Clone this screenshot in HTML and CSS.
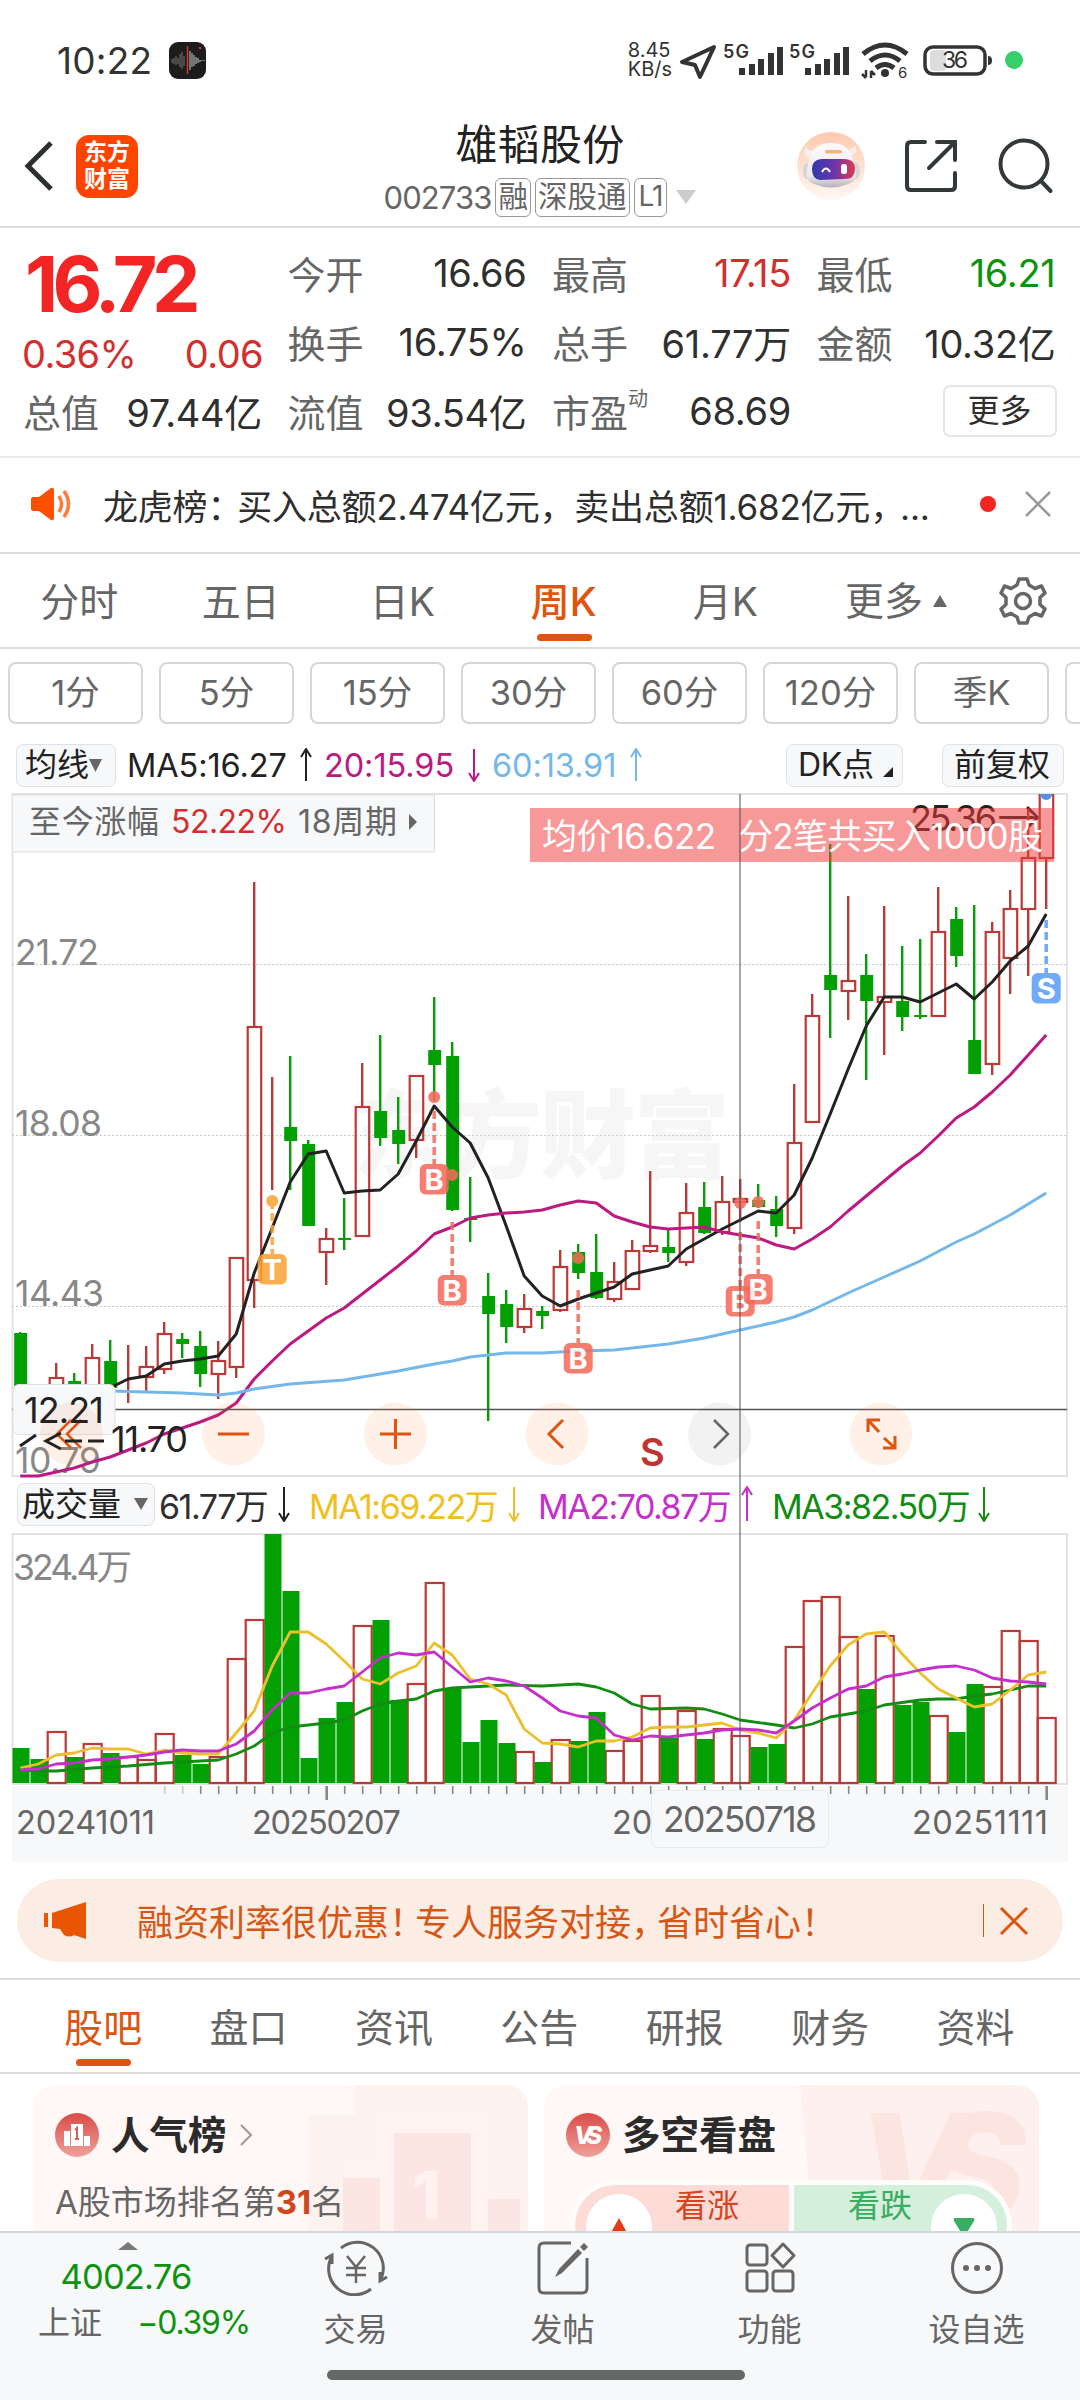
FILE: index.html
```html
<!DOCTYPE html>
<html lang="zh-CN">
<head>
    <meta charset="UTF-8">
    <meta name="viewport" content="width=device-width, initial-scale=1.0">
    <title>雄韬股份 002733</title>
    <link rel="stylesheet" href="styles.css">
</head>
<body>

<div class="page">
    <!-- Phone status bar -->
    <div class="status">
        <span class="time">10:22</span>
        <svg class="rec" width="37" height="37" viewBox="0 0 37 37">
            <rect width="37" height="37" rx="9" fill="#1c1c1c"/>
            <path d="M3 17v4M5 16v6M7 14v9M9 16v6M11 12v13M13 10v17M15 14v10" stroke="#777" stroke-width="1"/>
            <path d="M21 9v19M23 11v14M25 13v11M27 15v7M29 16v5M31 18v2M33 18v1M35 18v1" stroke="#ccc" stroke-width="1"/>
            <path d="M18.500 4v28" stroke="#d4372c" stroke-width="1.500"/>
            <circle cx="31" cy="6" r="1.300" fill="#d4372c"/>
        </svg>
        <span class="speed">8.45<br>KB/s</span>
        <svg class="sysicons" width="350" height="44" viewBox="676 38 350 44">
            <path d="M714 47L682 62L695 65L700 77Z" fill="none" stroke="#333" stroke-width="4" stroke-linejoin="round"/>
            <g fill="#333">
                <text class="g5" x="723" y="58" textLength="26">5G</text>
                <path d="M739 68h6v7h-6zM749 64h6v11h-6zM758 59h6v16h-6zM768 53h6v22h-6zM777 47h6v28h-6z"/>
                <text class="g5" x="789" y="58" textLength="26">5G</text>
                <path d="M805 68h6v7h-6zM815 64h6v11h-6zM824 59h6v16h-6zM834 53h6v22h-6zM843 47h6v28h-6z"/>
                <circle cx="885" cy="73" r="4"/>
                <text class="six" x="898" y="78">6</text>
            </g>
            <g fill="none" stroke="#333" stroke-width="5">
                <path d="M863 54Q885 36 907 54"/>
                <path d="M870 61Q885 49 900 61"/>
                <path d="M876 68Q885 61 894 68"/>
            </g>
            <path d="M866 70v7M862 74l4 4M871 78v-7M871 71l4 4" stroke="#333" stroke-width="2.500" fill="none"/>
            <rect x="930" y="50" width="16" height="21" rx="4" fill="#ddd"/>
            <rect x="925" y="47" width="60" height="27" rx="8" fill="none" stroke="#333" stroke-width="3.500"/>
            <path d="M988 56q4 0 4 4.500t-4 4.500z" fill="#333"/>
            <text class="bat" x="942" y="68" textLength="26" fill="#333">36</text>
            <circle cx="1014" cy="60" r="9" fill="#36cf69"/>
        </svg>
    </div>

    <!-- Title bar -->
    <div class="header">
        <div class="side">
            <svg width="32" height="54" viewBox="0 0 32 54"><path d="M28 4L5 27L28 50" fill="none" stroke="#2b2f2f" stroke-width="5"/></svg>
            <div class="logo">东方<br>财富</div>
        </div>
        <div class="name">
            <h1>雄韬股份</h1>
            <div class="code">
                <span class="num">002733</span><i>融</i><i>深股通</i><i class="l1">L1</i>
                <svg width="20" height="14"><path d="M0 0h20l-10 14z" fill="#ccc"/></svg>
            </div>
        </div>
        <div class="side right">
            <svg width="68" height="70" viewBox="0 0 68 70">
                <defs>
                    <linearGradient id="halo" x1="0" y1="0" x2="0" y2="1"><stop offset="0" stop-color="#ffc9ae"/><stop offset="1" stop-color="#fff8f4"/></linearGradient>
                    <linearGradient id="shell" x1="0" y1="0" x2="0" y2="1"><stop offset="0" stop-color="#fdfbfb"/><stop offset=".75" stop-color="#ebe8ec"/><stop offset="1" stop-color="#b5b0b8"/></linearGradient>
                    <linearGradient id="visor"><stop offset="0" stop-color="#3139a8"/><stop offset=".5" stop-color="#6a35b0"/><stop offset="1" stop-color="#e03a50"/></linearGradient>
                </defs>
                <circle cx="34" cy="35" r="34" fill="url(#halo)"/>
                <path d="M13 27Q4 24 9 15Q11 21 18 20zM53 25Q62 23 58 14Q56 19 49 19z" fill="#f6eeec"/>
                <ellipse cx="10" cy="40" rx="4" ry="8" fill="#d9d4d8"/><ellipse cx="59" cy="40" rx="4" ry="8" fill="#d9d4d8"/>
                <path d="M11 34Q13 12 34 12Q54 12 57 33Q63 50 51 53Q34 60 17 53Q6 49 11 34z" fill="url(#shell)"/>
                <path d="M24 28H47Q58 28 58 38Q58 48 48 48L23 49Q15 48 15 38Q15 29 24 28z" fill="url(#visor)"/>
                <path d="M25 41q4-7 8 0" fill="none" stroke="#fff" stroke-width="2"/>
                <rect x="44" y="33" width="6" height="10" rx="2.500" fill="#fff"/>
                <rect x="28" y="19" width="17" height="3.500" rx="1.500" fill="#eeb488"/>
            </svg>
            <svg width="56" height="56" viewBox="0 0 56 56" fill="none" stroke="#333838" stroke-width="4" stroke-linecap="round">
                <path d="M22 4H8Q4 4 4 8V48Q4 52 8 52H48Q52 52 52 48V35M34 4H52V22M52 4L26 30"/>
            </svg>
            <svg width="56" height="56" viewBox="0 0 56 56" fill="none" stroke="#333838" stroke-width="4" stroke-linecap="round">
                <circle cx="27" cy="26" r="23.500"/><path d="M44 43L53.500 53"/>
            </svg>
        </div>
    </div>

    <!-- Quote numbers -->
    <div class="quote">
        <div class="price">
            <b>16.72</b>
            <div class="change"><span>0.36%</span><span>0.06</span></div>
        </div>
        <div class="cell"><label>今开</label><span>16.66</span></div>
        <div class="cell"><label>最高</label><span class="red">17.15</span></div>
        <div class="cell"><label>最低</label><span class="green">16.21</span></div>
        <div class="cell"><label>换手</label><span>16.75%</span></div>
        <div class="cell"><label>总手</label><span>61.77万</span></div>
        <div class="cell"><label>金额</label><span>10.32亿</span></div>
        <div class="cell"><label>总值</label><span>97.44亿</span></div>
        <div class="cell"><label>流值</label><span>93.54亿</span></div>
        <div class="cell"><label>市盈<sup>动</sup></label><span>68.69</span></div>
        <div class="cell end"><button class="more">更多</button></div>
    </div>

    <!-- Notice line -->
    <div class="notice">
        <svg width="44" height="34" viewBox="0 0 44 34">
            <path d="M2 10h6L20 1q3-1 3 2v28q0 3-3 2L8 24H2q-2 0-2-2V12q0-2 2-2z" fill="#ff5000"/>
            <path d="M28 9q5 8 0 16M33 4q9 13 0 26" fill="none" stroke="#ff7a3a" stroke-width="3.500"/>
        </svg>
        <p>龙虎榜<span class="pt">：</span>买入总额2.474亿元，卖出总额1.682亿元<span class="pt">，</span>...</p>
        <i class="dot"></i>
        <svg width="28" height="28" viewBox="0 0 28 28"><path d="M2 2L26 26M26 2L2 26" stroke="#999" stroke-width="2.500"/></svg>
    </div>

    <!-- Period tabs -->
    <div class="tabs">
        <span>分时</span><span>五日</span><span>日K</span><span class="on">周K</span><span>月K</span>
        <span class="drop">更多<svg width="14" height="12"><path d="M0 12h14L7 0z" fill="#666"/></svg></span>
        <svg class="gear" width="50" height="50" viewBox="-25 -25 50 50" fill="none" stroke="#666" stroke-width="3.500" stroke-linejoin="round">
            <path d="M-4 -22H4L6 -16L12 -12.500L18.500 -15L22 -8L17 -3.500V3.500L22 8L18.500 15L12 12.500L6 16L4 22H-4L-6 16L-12 12.500L-18.500 15L-22 8L-17 3.500V-3.500L-22 -8L-18.500 -15L-12 -12.500L-6 -16Z"/>
            <circle r="7.500"/>
        </svg>
    </div>

    <div class="pills">
        <span>1分</span><span>5分</span><span>15分</span><span>30分</span><span>60分</span><span>120分</span><span>季K</span><span></span>
    </div>

    <!-- Charts -->
    <div class="charts">
        <div class="legend">
            <span class="btn b1">均线<svg width="13" height="13"><path d="M0 0h13L6.500 13z" fill="#666"/></svg></span>
            <span class="v m5">MA5:16.27</span><svg class="arr" width="12" height="34"><path d="M6 33V2M1 9L6 1L11 9" stroke="#222"/></svg>
            <span class="v m20">20:15.95</span><svg class="arr" width="12" height="34"><path d="M6 1V32M1 25L6 33L11 25" stroke="#bb1a80"/></svg>
            <span class="v m60">60:13.91</span><svg class="arr" width="12" height="34"><path d="M6 33V2M1 9L6 1L11 9" stroke="#74b8ea"/></svg>
            <span class="btn b2">DK点<svg width="10" height="10"><path d="M10 0V10H0z" fill="#222"/></svg></span>
            <span class="btn b3">前复权</span>
        </div>

        <svg class="kline" width="1080" height="686" viewBox="0 792 1080 686">
            <defs><clipPath id="frame"><rect x="12" y="794" width="1056" height="683"/></clipPath></defs>
            <text class="watermark" x="352" y="1170" textLength="378">东方财富</text>
            <rect x="12.500" y="794" width="1054.500" height="682" fill="none" stroke="#e2e2e2" stroke-width="2"/>
            <path d="M12 964.500H1067M12 1135.500H1067M12 1306.500H1067" stroke="#ccc" stroke-dasharray="2 2"/>
            <g class="axis">
                <text x="15" y="965" textLength="84">21.72</text>
                <text x="15" y="1136" textLength="87">18.08</text>
                <text x="15" y="1306" textLength="89">14.43</text>
                <text x="15" y="1473" textLength="86">10.79</text>
            </g>
            <text class="ink" x="910" y="831" textLength="133">25.36–&gt;</text>
            <g id="candles" clip-path="url(#frame)"></g>
            <g id="maLines" fill="none" stroke-width="3" stroke-linejoin="round"></g>
            <g id="marks"></g>
            <path d="M12 1409.500H1067" stroke="#555" stroke-width="1.300"/>
            <rect x="13" y="1384.500" width="102" height="50" rx="6" fill="#f7f8fa" stroke="#dde0e4"/>
            <g class="tools">
                <g fill="#ff6a20" fill-opacity=".1">
                    <circle cx="71.500" cy="1434" r="31.500"/><circle cx="233.500" cy="1434" r="31.500"/><circle cx="395.500" cy="1434" r="31.500"/>
                    <circle cx="557" cy="1434" r="31.500"/><circle cx="881" cy="1434" r="31.500"/>
                </g>
                <circle cx="719.500" cy="1434" r="31.500" fill="#000" fill-opacity=".05"/>
                <g fill="none" stroke="#dd5510" stroke-width="3">
                    <path d="M71 1420L57 1434L71 1448M81 1420L67 1434L81 1448" stroke-width="2.500"/>
                    <path d="M218 1434H249M380 1434H411M395.500 1419V1449M563 1420L549 1434L563 1448"/>
                    <path d="M868 1432V1420H880M868 1420L879 1432M883 1448H895V1436M884 1438L895 1448"/>
                </g>
                <path d="M714 1420L728 1434L714 1448" fill="none" stroke="#666" stroke-width="2.500"/>
            </g>
            <text class="ink" x="24" y="1423" textLength="80">12.21</text>
            <path d="M20 1446L36 1435M61 1433L46 1441L61 1449M65 1441H82M88 1441H104" fill="none" stroke="#222" stroke-width="3"/>
            <text class="ink" x="111" y="1452" textLength="77">11.70</text>
            <text class="sell" x="640" y="1466">S</text>
            <rect x="530" y="808" width="524" height="54" fill="#f23c3c" fill-opacity=".52"/>
            <g class="tip">
                <text x="542" y="849" textLength="174">均价16.622</text>
                <text x="738" y="849" textLength="305">分2笔共买入1000股</text>
            </g>
            <path d="M13 795H434.500V852H13" fill="#f7f8fa" stroke="#dcdcdc"/>
            <g class="since">
                <text x="29" y="833" textLength="130">至今涨幅</text>
                <text x="171" y="833" textLength="116" fill="#d42e2e">52.22%</text>
                <text x="298" y="833" textLength="99">18周期</text>
                <path d="M409 814L417 822L409 830z"/>
            </g>
        </svg>

        <div class="legend vol">
            <span class="btn b4">成交量<svg width="14" height="12"><path d="M0 0h14L7 12z" fill="#666"/></svg></span>
            <span class="v v0">61.77万</span><svg class="arr" width="12" height="36"><path d="M6 1V34M1 27L6 35L11 27" stroke="#222"/></svg>
            <span class="v v1">MA1:69.22万</span><svg class="arr" width="12" height="36"><path d="M6 1V34M1 27L6 35L11 27" stroke="#f0c020"/></svg>
            <span class="v v2">MA2:70.87万</span><svg class="arr" width="12" height="36"><path d="M6 35V2M1 9L6 1L11 9" stroke="#c52fcb"/></svg>
            <span class="v v3">MA3:82.50万</span><svg class="arr" width="12" height="36"><path d="M6 1V34M1 27L6 35L11 27" stroke="#138c13"/></svg>
        </div>

        <svg class="volume" width="1080" height="330" viewBox="0 1532 1080 330">
            <rect x="12" y="1786" width="1056" height="77" fill="#f7f8fa"/>
            <rect x="12.500" y="1534" width="1054.500" height="250" fill="none" stroke="#e2e2e2" stroke-width="2"/>
            <text class="axis" x="13" y="1580" textLength="119">324.4万</text>
            <g id="bars"></g>
            <g id="volLines" fill="none" stroke-width="2.800" stroke-linejoin="round"></g>
            <g id="ticks" stroke="#888" stroke-width="1.600"></g>
            <g class="dates">
                <text x="16" y="1834" textLength="139">20241011</text>
                <text x="252" y="1834" textLength="149">20250207</text>
                <text x="612" y="1834">20</text>
                <text x="912" y="1834" textLength="136">20251111</text>
                <rect x="651.500" y="1790.500" width="177" height="57" rx="6" fill="#f7f8fa" stroke="#e8eaed"/>
                <text class="cur" x="663" y="1832" textLength="154">20250718</text>
            </g>
        </svg>
        <div class="crosshair"></div>
    </div>

    <!-- Promo banner -->
    <div class="banner">
        <svg width="44" height="38" viewBox="0 0 44 38" fill="#ea5504"><path d="M0 11h4v14H0zM8 11L42 0V37L30 33Q26 36 20 33L16 27L8 26z"/></svg>
        <p>融资利率很优惠<span class="pt wide">！</span>专人服务对接<span class="pt wide">，</span>省时省心！</p>
        <i></i>
        <svg width="30" height="30" viewBox="0 0 30 30"><path d="M2 2L28 28M28 2L2 28" stroke="#dd5510" stroke-width="3"/></svg>
    </div>

    <div class="tabs lower">
        <span class="on">股吧</span><span>盘口</span><span>资讯</span><span>公告</span><span>研报</span><span>财务</span><span>资料</span>
    </div>

    <!-- Cards, cut off by the bottom bar -->
    <div class="cards">
        <div class="card">
            <svg class="bg" width="495" height="160" viewBox="33 2085 495 160">
                <path d="M355 2085H528V2245H308V2115H355z" fill="#fcebe9" opacity=".5"/>
                <path d="M372 2106H492V2245H340V2158H372z" fill="#fff4f2" opacity=".7"/>
                <path d="M394 2133H471V2245H394zM343 2178H380V2245H343zM488 2199H520V2245H488z" fill="#fbdfdc" opacity=".65"/>
                <text class="bigone" x="412" y="2219">1</text>
            </svg>
            <div class="title">
                <svg width="44" height="44" viewBox="0 0 44 44">
                    <defs><linearGradient id="ball" x1="0" y1="0" x2="0" y2="1"><stop offset="0" stop-color="#d94c48"/><stop offset="1" stop-color="#f0a09a"/></linearGradient></defs>
                    <circle cx="22" cy="22" r="22" fill="url(#ball)"/>
                    <path d="M9 18h6v15H9zM16 11h12v22H16zM29 23h6v10h-6z" fill="#fff"/>
                    <path d="M20 17l2-2v11M20 26h4" stroke="#d9605a" stroke-width="2" fill="none"/>
                </svg>
                <h2>人气榜</h2>
                <svg width="14" height="22" viewBox="0 0 14 22"><path d="M2 1L12 11L2 21" fill="none" stroke="#999" stroke-width="2"/></svg>
            </div>
            <p>A股市场排名第<b>31</b>名</p>
        </div>
        <div class="card">
            <svg class="bg" width="495" height="160" viewBox="544 2085 495 160">
                <path d="M800 2085H1039V2245H815z" fill="#fcebe9" opacity=".6"/>
                <text class="bigvs" x="856" y="2222" textLength="170">VS</text>
            </svg>
            <div class="title">
                <svg width="44" height="44" viewBox="0 0 44 44"><circle cx="22" cy="22" r="22" fill="url(#ball)"/><text class="vs" x="8" y="31" textLength="28">VS</text></svg>
                <h2>多空看盘</h2>
            </div>
            <div class="vote">
                <div class="up"><i><svg width="22" height="20"><path d="M11 0L22 20H0z" fill="#e23d12"/></svg></i>看涨</div>
                <div class="down">看跌<i><svg width="22" height="20"><path d="M2 0H20Q22 0 21 3L13 16H9L1 3Q0 0 2 0z" fill="#3aad62"/></svg></i></div>
            </div>
        </div>
    </div>

    <!-- Bottom bar -->
    <div class="bottom">
        <div class="index">
            <svg width="20" height="8"><path d="M10 0L20 8H0z" fill="#777"/></svg>
            <span class="point">4002.76</span>
            <div><span>上证</span><span class="pct">−0.39%</span></div>
        </div>
        <div class="item">
            <svg width="64" height="56" viewBox="-32 -28 64 56" fill="none" stroke="#666" stroke-width="3">
                <path d="M-15 -20A26 26 0 0 1 25 11M15 21A26 26 0 0 1 -24 -12M-31 -9L-24 -13L-24 -4M31 9L24 13L24 4"/>
                <path d="M-9 -12L0 -1L9 -12M0 -1V15M-10 0H10M-10 7H10" stroke-width="2.500"/>
            </svg>
            <span>交易</span>
        </div>
        <div class="item">
            <svg width="64" height="56" viewBox="-32 -28 64 56" fill="none" stroke="#666" stroke-width="3">
                <path d="M8 -25H-19Q-24 -25 -24 -20V20Q-24 25 -19 25H19Q24 25 24 20V-10"/>
                <path d="M-8 9L-4 1L15 -19L19 -15L-1 5zM17 -21L21 -25L25 -21L21 -17z" fill="#666" stroke="none"/>
            </svg>
            <span>发帖</span>
        </div>
        <div class="item">
            <svg width="64" height="56" viewBox="-32 -28 64 56" fill="none" stroke="#666" stroke-width="3">
                <rect x="-23" y="-23" width="20" height="20" rx="3"/><rect x="-23" y="3" width="20" height="20" rx="3"/><rect x="3" y="3" width="20" height="20" rx="3"/>
                <path d="M13 -24L24 -12.500L13 -1L2 -12.500z" stroke-linejoin="round"/>
            </svg>
            <span>功能</span>
        </div>
        <div class="item">
            <svg width="64" height="56" viewBox="-32 -28 64 56"><circle r="24.500" fill="none" stroke="#666" stroke-width="3"/><g fill="#666"><circle cx="-11" r="3"/><circle r="3"/><circle cx="11" r="3"/></g></svg>
            <span>设自选</span>
        </div>
        <div class="homebar"></div>
    </div>
</div>

<script src="chart.js"></script>
</body>
</html>
```
FILE: styles.css
```css
* {
    box-sizing: border-box;
}
body {
    margin: 0;
    background-color: #fff;
    font-family: Inter, "Noto Sans CJK SC", sans-serif;
    color: #2f2f2f;
}
h1, h2, p {
    margin: 0;
}
i {
    font-style: normal;
}
svg {
    display: block;
    flex: none;
}
.page {
    width: 1080px;
    height: 2400px;
    overflow: hidden;
}
.red {
    color: #d42e2e;
}
.green {
    color: #0d930d;
}

/* status bar */
.status {
    display: flex;
    align-items: center;
    height: 115px;
    padding: 5px 54px 0 57px;
}
.time {
    width: 112px;
    font-size: 37px;
    letter-spacing: 0.2px;
    color: #333;
}
.speed {
    margin-left: auto;
    margin-right: 4px;
    font-size: 20px;
    line-height: 19px;
    color: #333;
}
.g5 {
    font-size: 18px;
    font-weight: 600;
}
.six {
    font-size: 15px;
}
.bat {
    font-size: 23px;
}

/* title bar */
.header {
    display: grid;
    grid-template-columns: 300px 1fr 300px;
    height: 113px;
    border-bottom: 2px solid #ddd;
}
.side {
    display: flex;
    align-items: center;
    height: 102px;
    padding-left: 23px;
    gap: 21px;
}
.side.right {
    justify-content: flex-end;
    padding: 0 27px 0 0;
    gap: 38px;
}
.logo {
    width: 62px;
    height: 63px;
    padding-top: 4px;
    border-radius: 13px;
    background-color: #ff4400;
    color: #fff;
    font-size: 23px;
    font-weight: 700;
    line-height: 27px;
    text-align: center;
}
.name {
    text-align: center;
}
.name h1 {
    height: 60px;
    padding-top: 5px;
    font-size: 42px;
    font-weight: 400;
    line-height: 50px;
    letter-spacing: 0.3px;
    color: #222;
}
.code {
    display: flex;
    align-items: center;
    justify-content: center;
    height: 44px;
    gap: 4px;
    font-size: 31px;
    color: #666;
}
.code .num {
    letter-spacing: -0.9px;
}
.code i {
    height: 39px;
    padding: 0 2px;
    border: 1.5px solid #999;
    border-radius: 6px;
    font-size: 29.5px;
    line-height: 35px;
}
.code .l1 {
    padding: 0 4px;
    font-size: 28px;
    letter-spacing: -1px;
}
.code svg {
    margin-left: 5px;
}

/* quote */
.quote {
    display: grid;
    grid-template-columns: repeat(4, 240px);
    grid-template-rows: 69px 69px 69px;
    column-gap: 24.5px;
    height: 230px;
    padding: 10px 22px 0 23px;
    border-bottom: 2px solid #eaeaea;
}
.price {
    grid-row: span 2;
    color: #d42e2e;
}
.price b {
    display: block;
    height: 93px;
    padding-left: 2px;
    font-size: 77px;
    font-weight: 700;
    letter-spacing: -5.6px;
    line-height: 93px;
    color: #f22424;
}
.change {
    display: flex;
    justify-content: space-between;
    margin-left: -1px;
    font-size: 38px;
    line-height: 46px;
    letter-spacing: -0.6px;
}
.cell {
    display: flex;
    align-items: center;
    justify-content: space-between;
    font-size: 38px;
    white-space: nowrap;
}
.cell label {
    color: #666;
}
.cell span {
    margin-right: 1px;
    letter-spacing: -0.3px;
}
.cell sup {
    margin-right: -30px;
    font-size: 20px;
    line-height: 0;
    vertical-align: 21px;
}
.cell.end {
    justify-content: flex-end;
}
.more {
    width: 114px;
    height: 52px;
    padding: 0;
    border: 2px solid #e6e6e6;
    border-radius: 7px;
    background-color: #fff;
    font: inherit;
    font-size: 32px;
    line-height: 46px;
    color: #2f2f2f;
}

/* notice */
.notice {
    display: flex;
    align-items: center;
    height: 96px;
    padding: 0 28px 2px 31px;
    border-bottom: 2px solid #ddd;
}
.notice p {
    width: 850px;
    margin-left: 28px;
    font-size: 35px;
    letter-spacing: -0.2px;
    white-space: nowrap;
}
.pt {
    margin-right: -5px;
}
.pt.wide {
    margin-right: -10px;
}
.dot {
    width: 16px;
    height: 16px;
    margin: 0 28px;
    border-radius: 50%;
    background-color: #f22424;
}

/* tabs */
.tabs {
    display: flex;
    height: 95px;
    border-bottom: 2px solid #ddd;
    font-size: 39px;
    line-height: 96px;
    color: #666;
}
.tabs > span {
    position: relative;
    left: -1.5px;
    width: 161.5px;
    text-align: center;
}
.tabs .on {
    color: #dd5510;
    font-weight: 500;
}
.tabs .on::after {
    content: "";
    position: absolute;
    left: 50%;
    bottom: 6px;
    width: 55px;
    height: 7px;
    margin-left: -27px;
    border-radius: 4px;
    background-color: #dd5510;
}
.tabs .drop {
    display: flex;
    align-items: center;
    justify-content: center;
    width: 180px;
    gap: 10px;
}
.gear {
    margin: 22px 0 0 10px;
}
.tabs.lower {
    height: 96px;
    margin-top: 16px;
    padding: 0 31px;
    border-top: 2px solid #ddd;
}
.tabs.lower > span {
    left: -0.5px;
    width: 145.4px;
    font-weight: 400;
}
.pills {
    display: flex;
    gap: 16px;
    height: 94px;
    padding: 13px 0 0 8px;
    overflow: hidden;
}
.pills span {
    flex: none;
    width: 135px;
    height: 62px;
    border: 2px solid #d6d6d6;
    border-radius: 8px;
    font-size: 34.5px;
    line-height: 58px;
    text-align: center;
    color: #666;
}

/* charts */
.charts {
    position: relative;
}
.legend {
    display: flex;
    align-items: center;
    height: 49px;
    padding: 0 16px 5px 16px;
    font-size: 32.5px;
    white-space: nowrap;
}
.legend.vol {
    height: 54px;
    padding: 0 16px 2px 17px;
    font-size: 34px;
}
.btn {
    display: flex;
    align-items: center;
    height: 43px;
    padding-left: 8px;
    border: 1.5px solid #dfe2e6;
    border-radius: 7px;
    background-color: #f7f8fa;
    font-size: 32px;
    line-height: 42px;
    color: #222;
}
.b1 {
    width: 100px;
    margin-right: 11px;
}
.b2 {
    width: 117px;
    margin-left: auto;
    padding-left: 11px;
    letter-spacing: -0.3px;
}
.b2 svg {
    margin: 14px 0 0 9px;
}
.b3 {
    width: 122px;
    margin-left: 39px;
    padding-left: 11px;
}
.b4 {
    width: 138px;
    margin-right: 4px;
    padding-left: 4px;
    gap: 13px;
    font-size: 33px;
}
.v {
    letter-spacing: -0.1px;
}
.vol .v {
    letter-spacing: -1.5px;
}
.m5 {
    width: 173px;
    color: #222;
}
.m20 {
    width: 144px;
    margin-left: 12px;
    color: #bb1a80;
}
.m60 {
    width: 138px;
    margin-left: 12px;
    color: #74b8ea;
}
.v0 {
    width: 119px;
}
.v1 {
    width: 199px;
    margin-left: 19px;
    color: #f0c020;
}
.v2 {
    width: 203px;
    margin-left: 18px;
    color: #c52fcb;
}
.v3 {
    width: 206px;
    margin-left: 19px;
    color: #138c13;
}
.arr {
    fill: none;
    stroke-width: 2;
}
.watermark {
    font-size: 96px;
    font-weight: 900;
    fill: #f6f6f6;
}
.axis {
    font-size: 35.5px;
    fill: #888;
}
.ink {
    font-size: 36px;
    fill: #222;
}
.sell {
    font-size: 38px;
    font-weight: 600;
    fill: #c23330;
}
.tip {
    font-size: 35px;
    fill: #fff;
}
.since {
    font-size: 32px;
    fill: #666;
}
.mark {
    font-size: 29px;
    font-weight: 700;
    fill: #fff;
    text-anchor: middle;
}
.dates {
    font-size: 32.5px;
    fill: #666;
}
.cur {
    font-size: 35.5px;
}
.crosshair {
    position: absolute;
    left: 739px;
    top: 51px;
    width: 2px;
    height: 995px;
    background-color: rgba(80, 80, 80, 0.5);
}

/* banner */
.banner {
    display: flex;
    align-items: center;
    width: 1046px;
    height: 83px;
    margin: 17px 0 0 17px;
    padding: 0 34px 0 27px;
    border-radius: 42px;
    background-color: #fcede4;
    color: #d65715;
}
.banner p {
    margin-left: 49px;
    padding-bottom: 2px;
    font-size: 36px;
    white-space: nowrap;
}
.banner i {
    width: 1.5px;
    height: 33px;
    margin: 0 15px 0 auto;
    background-color: #d65715;
}

/* cards */
.cards {
    display: flex;
    gap: 16px;
    height: 157px;
    padding: 11px 33px 0;
    overflow: hidden;
}
.card {
    position: relative;
    width: 495px;
    height: 180px;
    padding: 28px 22px;
    border-radius: 22px;
    background-color: #fff8f6;
    overflow: hidden;
}
.bg {
    position: absolute;
    left: 0;
    top: 0;
}
.bigone {
    font-size: 66px;
    font-weight: 800;
    fill: #fff1ef;
}
.bigvs {
    font-size: 150px;
    font-weight: 800;
    font-style: italic;
    fill: #fbdfdc;
    opacity: 0.7;
}
.vs {
    font-size: 24px;
    font-weight: 800;
    font-style: italic;
    fill: #fff;
}
.title {
    position: relative;
    display: flex;
    align-items: center;
    height: 44px;
}
.title h2 {
    margin: 0 12px;
    font-size: 38.5px;
    font-weight: 700;
    line-height: 44px;
    color: #2b2b2b;
}
.card p {
    position: relative;
    margin-top: 24px;
    font-size: 33px;
    line-height: 42px;
    color: #666;
}
.card b {
    color: #d0451b;
}
.vote {
    position: relative;
    display: flex;
    gap: 5px;
    width: 442px;
    height: 90px;
    margin: 23px 0 0 4px;
    border: 5px solid #fffdfc;
    border-radius: 50px;
    background-color: #fffdfc;
    overflow: hidden;
    font-size: 32px;
    line-height: 42px;
}
.vote div {
    display: flex;
    flex: 1;
    align-items: flex-start;
}
.vote i {
    display: flex;
    justify-content: center;
    width: 66px;
    height: 66px;
    margin-top: 9px;
    padding-top: 24px;
    border-radius: 50%;
    background-color: #fff;
}
.up {
    gap: 23px;
    padding-left: 11px;
    background-color: #fddcd8;
    color: #d6431c;
}
.down {
    justify-content: flex-end;
    gap: 19px;
    padding-right: 10px;
    background-color: #d5efdd;
    color: #3aad62;
}

/* bottom bar */
.bottom {
    position: relative;
    display: flex;
    height: 170px;
    padding-left: 24px;
    border-top: 2px solid #d5d7da;
    background-color: #f7f8fa;
    color: #666;
}
.index {
    display: flex;
    flex-direction: column;
    align-items: center;
    width: 228px;
    padding-top: 9px;
    color: #666;
}
.index svg {
    margin-left: -20px;
}
.point {
    margin: 3px 0 0 -24px;
    font-size: 34.5px;
    line-height: 48px;
    letter-spacing: -0.8px;
    color: #0d930d;
}
.index div {
    display: flex;
    justify-content: space-between;
    width: 212px;
    margin-top: 0;
    margin-left: 12px;
    font-size: 32px;
    line-height: 44px;
    white-space: nowrap;
}
.pct {
    letter-spacing: -1.2px;
    color: #0d930d;
}
.item {
    display: flex;
    flex-direction: column;
    align-items: center;
    width: 207px;
    padding-top: 7px;
    font-size: 32px;
    line-height: 44px;
}
.item span {
    margin-top: 12px;
}
.homebar {
    position: absolute;
    left: 327px;
    bottom: 21px;
    width: 418px;
    height: 10px;
    border-radius: 5px;
    background-color: #666867;
}
```
FILE: chart.js
```js
const RED = '#b93a36';
const GREEN = '#02a002';
const x = i => 20.2 + i * 18;

// [color, high, top, bottom, low] for each week
const weeks = [
    ['g', 1332, 1333, 1390, 1390], ['g', 1390, 1392, 1400, 1404], ['r', 1363, 1378, 1395, 1398], ['g', 1373, 1381, 1390, 1392],
    ['r', 1344, 1358, 1390, 1392], ['g', 1340, 1361, 1388, 1390], ['r', 1345, 1378, 1378, 1403], ['r', 1346, 1367, 1377, 1391],
    ['r', 1322, 1334, 1369, 1374], ['g', 1333, 1339, 1344, 1358], ['g', 1331, 1346, 1374, 1387], ['r', 1341, 1361, 1374, 1399],
    ['r', 1258, 1258, 1367, 1378], ['r', 882, 1027, 1280, 1308], ['r', 1077, 1123, 1123, 1190], ['g', 1056, 1127, 1141, 1190],
    ['g', 1140, 1144, 1226, 1226], ['r', 1228, 1239, 1252, 1285], ['g', 1198, 1238, 1240, 1250], ['r', 1063, 1107, 1236, 1236],
    ['g', 1035, 1111, 1138, 1146], ['g', 1097, 1130, 1144, 1164], ['r', 1076, 1076, 1140, 1158], ['g', 997, 1050, 1065, 1101],
    ['g', 1042, 1056, 1210, 1211], ['g', 1177, 1218, 1220, 1242], ['g', 1273, 1296, 1314, 1421], ['g', 1290, 1304, 1327, 1343],
    ['r', 1294, 1309, 1327, 1333], ['g', 1306, 1311, 1316, 1329], ['r', 1250, 1267, 1310, 1312], ['g', 1244, 1252, 1273, 1279],
    ['g', 1234, 1272, 1298, 1299], ['r', 1262, 1282, 1299, 1302], ['r', 1240, 1251, 1289, 1289], ['r', 1171, 1246, 1251, 1253],
    ['g', 1230, 1247, 1253, 1262], ['r', 1183, 1213, 1262, 1266], ['g', 1182, 1207, 1233, 1234], ['r', 1176, 1202, 1232, 1235],
    ['r', 1179, 1199, 1202, 1222], ['g', 1184, 1200, 1207, 1208], ['g', 1196, 1209, 1226, 1237], ['r', 1084, 1143, 1228, 1234],
    ['r', 994, 1016, 1122, 1123], ['g', 844, 975, 990, 1038], ['r', 896, 981, 991, 1020], ['g', 954, 975, 1001, 1080],
    ['r', 906, 997, 1002, 1055], ['g', 946, 1001, 1017, 1031], ['g', 939, 1015, 1017, 1019], ['r', 887, 932, 1016, 1016],
    ['g', 907, 919, 956, 967], ['g', 905, 1040, 1074, 1074], ['r', 922, 932, 1064, 1075], ['r', 890, 909, 958, 994],
    ['r', 809, 858, 909, 976], ['r', 790, 790, 858, 909]
];

// top of each volume bar, same colours as the weeks above
const volTops = [1748, 1759, 1732, 1757, 1744, 1753, 1757, 1760, 1734, 1755, 1764, 1757, 1659, 1620, 1534, 1591, 1758, 1718, 1702,
    1626, 1620, 1700, 1684, 1583, 1688, 1742, 1720, 1743, 1752, 1762, 1740, 1741, 1712, 1751, 1741, 1696, 1738, 1711, 1739, 1729,
    1736, 1747, 1744, 1647, 1601, 1597, 1637, 1689, 1636, 1705, 1702, 1716, 1732, 1684, 1687, 1631, 1641, 1718];
// weeks where the volume colour differs from the candle
const volColor = weeks.map(w => w[0]);
volColor[14] = 'g';
volColor[17] = 'g';
volColor[23] = 'r';
volColor[45] = 'r';

// moving averages: index -> y
const ma = [
    ['#222', [[5.2, 1386], [6, 1379], [7, 1376], [8, 1364], [9, 1361], [10, 1359], [11, 1356], [12, 1334], [13, 1273], [14, 1228], [15, 1182],
        [16, 1154], [17, 1151], [18, 1193], [19, 1191], [20, 1190], [21, 1174], [22, 1141], [23, 1106], [24, 1127], [25, 1143], [26, 1178],
        [27, 1226], [28, 1276], [29, 1296], [30, 1306], [31, 1299], [32, 1293], [33, 1287], [34, 1274], [35, 1270], [36, 1266], [37, 1249],
        [38, 1239], [39, 1229], [40, 1220], [41, 1211], [42, 1213], [43, 1195], [44, 1158], [45, 1114], [46, 1069], [47, 1026], [48, 997],
        [49, 997], [50, 1002], [51, 993], [52, 984], [53, 999], [54, 982], [55, 961], [56, 946], [57, 914]]],
    ['#bb1a80', [[0, 1476], [1, 1476], [2, 1472], [3, 1468], [4, 1462], [5, 1457], [6, 1450], [7, 1443], [8, 1434], [9, 1428], [10, 1422],
        [11, 1415], [12, 1403], [13, 1379], [14, 1361], [15, 1344], [16, 1331], [17, 1318], [18, 1308], [19, 1294], [20, 1280], [21, 1266],
        [22, 1251], [23, 1234], [24, 1227], [25, 1218], [26, 1215], [27, 1213], [28, 1212], [29, 1210], [30, 1205], [31, 1201], [32, 1203],
        [33, 1216], [34, 1222], [35, 1227], [36, 1229], [37, 1228], [38, 1227], [39, 1232], [40, 1235], [41, 1238], [42, 1245], [43, 1249],
        [44, 1239], [45, 1227], [46, 1211], [47, 1196], [48, 1181], [49, 1166], [50, 1153], [51, 1136], [52, 1118], [53, 1107], [54, 1092],
        [55, 1075], [56, 1055], [57, 1035]]],
    ['#74b8ea', [[0, 1391], [5, 1391], [7, 1392], [9, 1393], [11, 1395], [12, 1393], [13, 1389], [15, 1384], [18, 1380], [19, 1377], [21, 1371],
        [23, 1364], [24, 1361], [25, 1357], [26, 1355], [27, 1353], [29, 1353], [31, 1351], [33, 1350], [36, 1344], [38, 1338], [40, 1330],
        [42, 1322], [43, 1317], [44, 1310], [46, 1293], [48, 1277], [50, 1261], [52, 1242], [53, 1234], [55, 1215], [57, 1193]]]
];

const volMa = [
    ['#138c13', [[0, 1770], [1, 1771], [2, 1771], [4, 1768], [6, 1766], [8, 1763], [11, 1760], [12, 1754], [13, 1746], [14, 1733], [15, 1727],
        [16, 1725], [17, 1723], [18, 1720], [19, 1711], [20, 1704], [21, 1701], [22, 1699], [23, 1691], [24, 1688], [26, 1686], [27, 1685],
        [29, 1686], [31, 1684], [32, 1687], [33, 1693], [34, 1704], [35, 1709], [37, 1708], [38, 1709], [39, 1714], [40, 1720], [42, 1725],
        [43, 1728], [44, 1724], [45, 1717], [47, 1711], [48, 1705], [50, 1700], [51, 1699], [52, 1699], [53, 1696], [54, 1694], [55, 1690],
        [56, 1686], [57, 1686]]],
    ['#ebc02c', [1768, 1764, 1755, 1753, 1748, 1749, 1749, 1754, 1750, 1753, 1754, 1754, 1733, 1711, 1666, 1632, 1632, 1644, 1661, 1679, 1684,
        1673, 1666, 1643, 1655, 1679, 1684, 1695, 1729, 1743, 1744, 1747, 1741, 1741, 1737, 1728, 1727, 1727, 1725, 1723, 1730, 1733,
        1738, 1720, 1693, 1666, 1645, 1634, 1632, 1654, 1673, 1689, 1698, 1707, 1704, 1690, 1675, 1672].map((y, i) => [i, y])],
    ['#c52fcb', [1770, 1769, 1764, 1763, 1760, 1759, 1757, 1755, 1752, 1750, 1751, 1751, 1744, 1731, 1710, 1693, 1693, 1689, 1686, 1672, 1658,
        1653, 1655, 1652, 1667, 1682, 1678, 1681, 1686, 1698, 1711, 1716, 1718, 1735, 1740, 1736, 1737, 1735, 1733, 1730, 1729, 1730,
        1733, 1721, 1708, 1698, 1689, 1686, 1677, 1674, 1670, 1667, 1666, 1670, 1678, 1681, 1682, 1684].map((y, i) => [i, y])]
];

// trade marks: [letter, color, week, dot y, dash start, box top]
const marks = [
    ['T', '#fba234', 14, 1201, 1201, 1254],
    ['B', '#f56a5a', 23, 1097, 1111, 1164],
    ['B', '#f56a5a', 24, 1175, 1222, 1275],
    ['B', '#f56a5a', 31, 1258, 1290, 1343],
    ['B', '#f56a5a', 40, 1203, 1232, 1286],
    ['B', '#f56a5a', 41, 1202, 1221, 1274],
    ['S', '#5a9df5', 57, 0, 920, 973]
];

// Draw the candles
document.getElementById('candles').innerHTML = weeks.map(([c, high, top, bottom, low], i) => {
    const color = c === 'r' ? RED : GREEN;
    let s = `<path d="M${x(i)} ${high}V${top}M${x(i)} ${bottom}V${low}" stroke="${color}" stroke-width="2.4"/>`;
    if (c === 'g') {
        s += `<rect x="${x(i) - 6}" y="${top}" width="13" height="${bottom - top}" fill="${color}"/>`;
    } else {
        s += `<rect x="${x(i) - 6.5}" y="${top}" width="13.5" height="${bottom - top}" fill="none" stroke="${color}" stroke-width="2.2"/>`;
    }
    return s;
}).join('') + `<circle cx="${x(57)}" cy="794" r="6" fill="#5a8fe8"/>`;

// Draw the volume bars, green ones over the red outlines
document.getElementById('bars').innerHTML = volTops.map((top, i) => volColor[i] === 'r'
    ? `<rect x="${x(i) - 8.5}" y="${top}" width="18" height="${1783 - top}" fill="none" stroke="${RED}" stroke-width="2.2"/>` : '').join('')
    + volTops.map((top, i) => volColor[i] === 'g'
    ? `<rect x="${x(i) - 7.7}" y="${top}" width="17" height="${1783 - top}" fill="${GREEN}"/>` : '').join('');

function drawLines(id, lines) {
    document.getElementById(id).innerHTML = lines.map(([color, pts]) =>
        `<polyline stroke="${color}" points="${pts.map(p => x(p[0]) + ',' + p[1]).join(' ')}"/>`).join('');
}
drawLines('maLines', ma);
drawLines('volLines', volMa);

document.getElementById('marks').innerHTML = marks.map(([t, color, i, dot, from, box]) => `
    <g opacity=".86">
        ${dot ? `<circle cx="${x(i)}" cy="${dot}" r="6" fill="${color}"/>` : ''}
        <path d="M${x(i)} ${from}V${box}" stroke="${color}" stroke-width="3.5" stroke-dasharray="8 4"/>
        <rect x="${x(i) - 14.5}" y="${box}" width="29" height="30.5" rx="6" fill="${color}"/>
        <text class="mark" x="${x(i)}" y="${box + 26}">${t}</text>
    </g>`).join('');

// Axis ticks, the long ones sit on the labelled weeks
let ticks = '';
for (let i = 8; i < weeks.length; i++) {
    const long = i === 17 || i === 57;
    ticks += `<path d="M${x(i) + 0.5} 1786V${long ? 1800 : 1794}" stroke-opacity="${i < 10 ? 0.4 : 1}" stroke-width="${long ? 2.6 : 1.6}"/>`;
}
document.getElementById('ticks').innerHTML = ticks;
```
